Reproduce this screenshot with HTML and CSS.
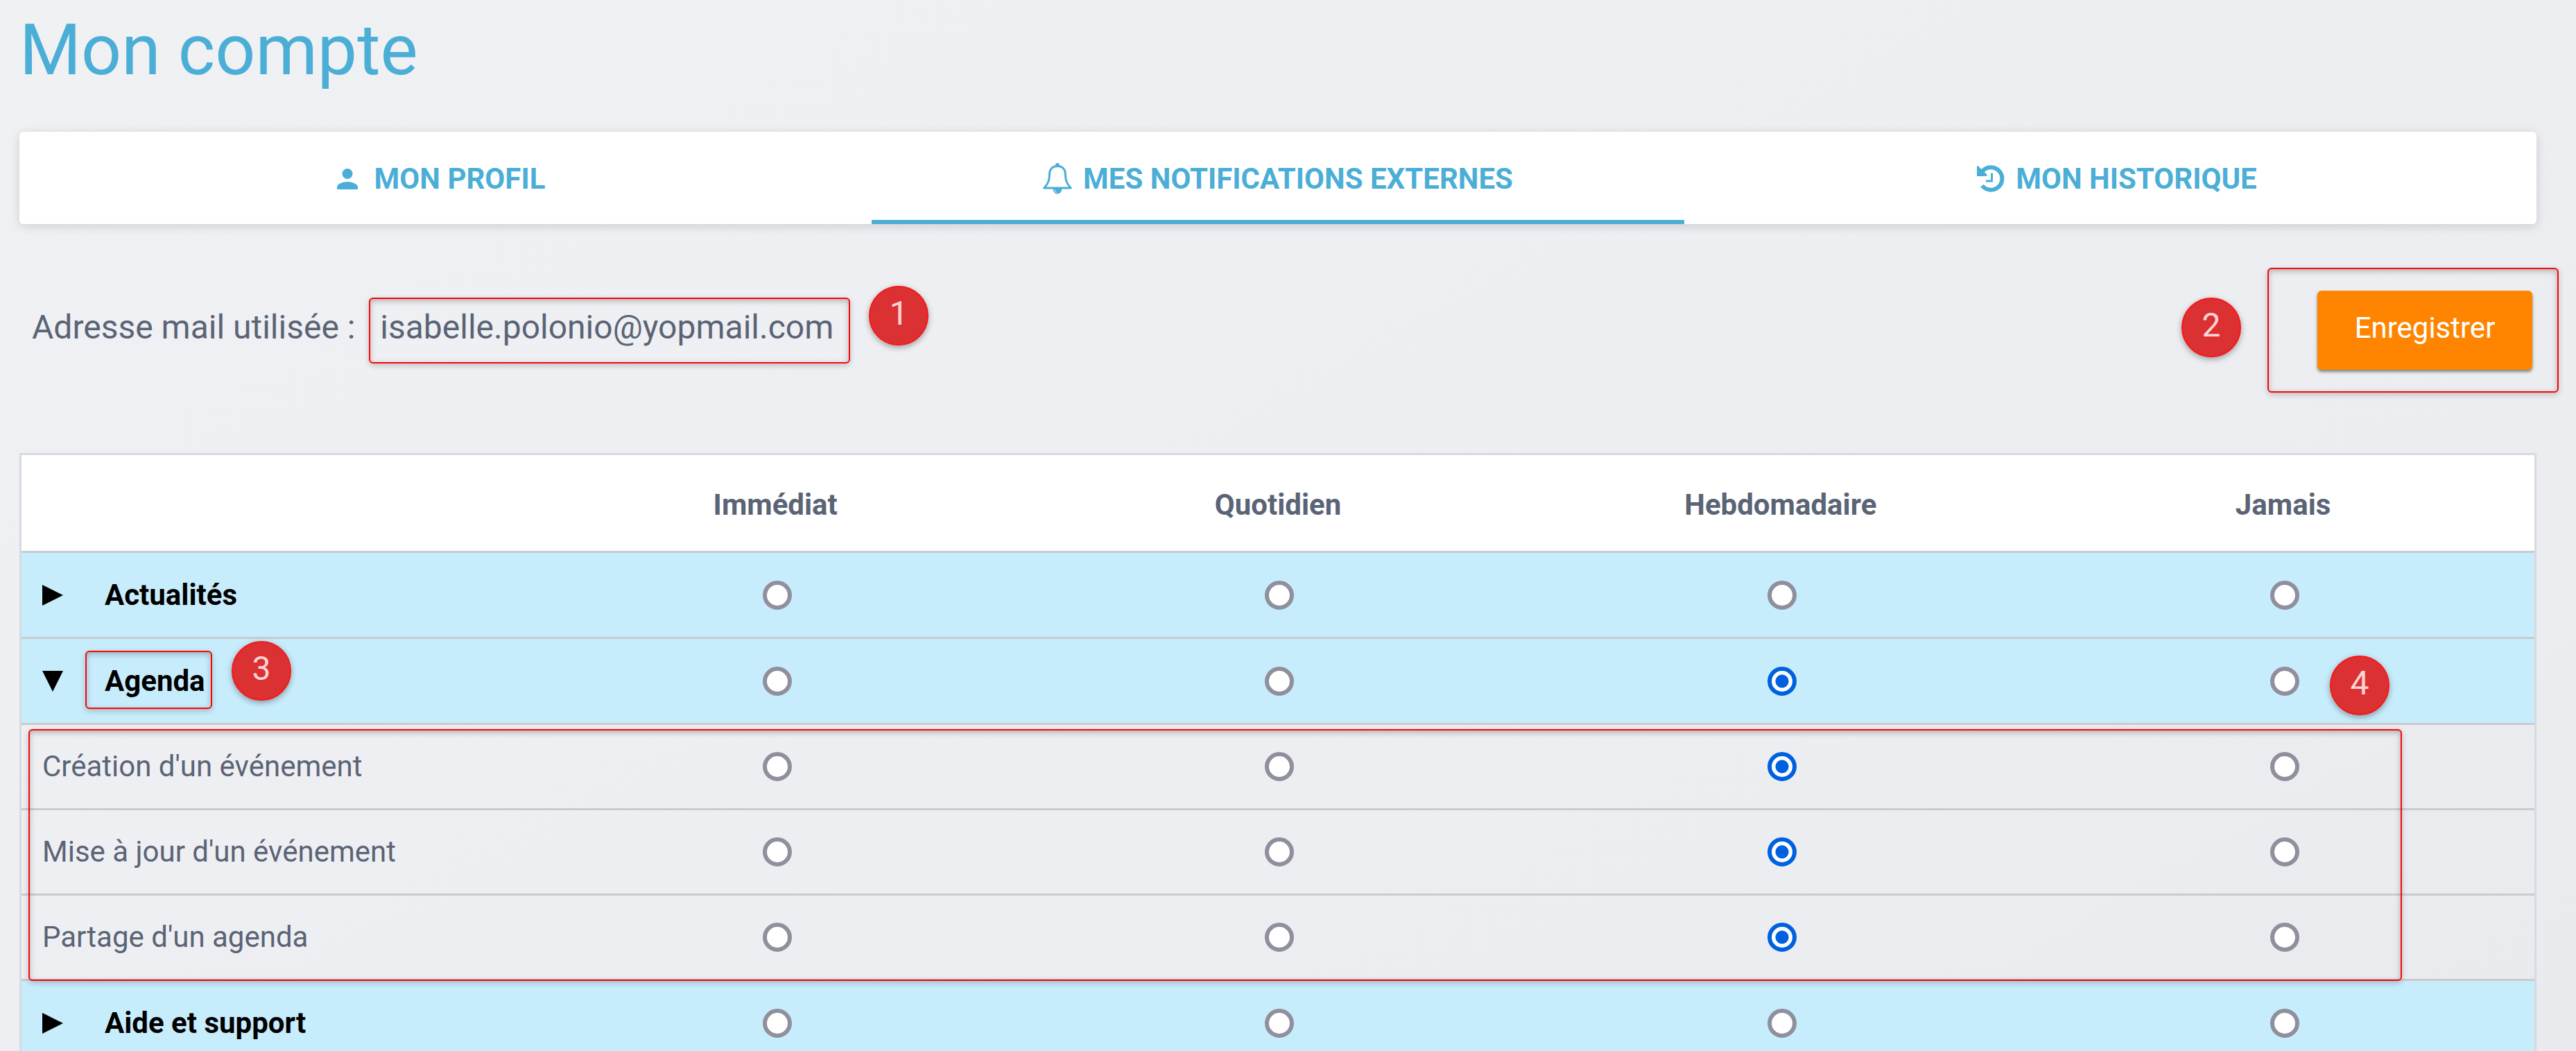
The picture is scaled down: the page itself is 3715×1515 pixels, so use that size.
FILE: index.html
```html
<!DOCTYPE html>
<html lang="fr">
<head>
<meta charset="utf-8">
<meta name="viewport" content="width=device-width, initial-scale=1">
<title>Mon compte</title>
<link rel="stylesheet" href="styles.css">
</head>
<body>
<main class="page">
  <h1 class="title">Mon compte</h1>

  <nav class="tabs">
    <a class="tab" href="#profil">
      <svg class="icon icon-user" viewBox="0 0 30 30" aria-hidden="true"><circle cx="15" cy="7.500" r="7.500"/><path d="M0 30v-3c0-5 8-8 15-8s15 3 15 8v3z"/></svg>
      <span>MON PROFIL</span>
    </a>
    <a class="tab tab-active" href="#notifications" aria-current="page">
      <svg class="icon icon-bell" viewBox="0 0 42 45" aria-hidden="true"><path class="bell-line" d="M21 4.500C13 4.500 9.500 10 9.500 16C9.500 26 7 30 1.800 36H40.200C35 30 32.500 26 32.500 16C32.500 10 29 4.500 21 4.500Z"/><circle cx="21" cy="3" r="3"/><path d="M14.500 37a6.500 7.500 0 0 0 13 0z"/><path class="bell-glint" d="M16.800 38.500q.8 3 3 4"/></svg>
      <span>MES NOTIFICATIONS EXTERNES</span>
    </a>
    <a class="tab" href="#historique">
      <svg class="icon icon-history" viewBox="0 0 40 40" aria-hidden="true"><path class="history-line" d="M8 8.800A16.200 16.200 0 1 1 7.500 29.500"/><path d="M0 1.500Q1.500 0 3 2.500L15.500 14.500Q13 16 11 16H0z"/><path class="history-hand" d="M21.500 11.500V23H13"/></svg>
      <span>MON HISTORIQUE</span>
    </a>
  </nav>

  <form class="settings">
    <div class="toolbar">
      <p class="mail">Adresse mail utilisée : <span class="address">isabelle.polonio@yopmail.com<span class="frame frame-address"></span><span class="pin pin-1">1</span></span></p>
      <div class="save-area">
        <button class="save" type="submit">Enregistrer</button>
        <span class="frame frame-save"></span><span class="pin pin-2">2</span>
      </div>
    </div>

    <div class="grid-area">
      <table class="grid">
        <thead>
          <tr><td></td><th scope="col">Immédiat</th><th scope="col">Quotidien</th><th scope="col">Hebdomadaire</th><th scope="col">Jamais</th></tr>
        </thead>
        <tbody>
          <tr class="group">
            <th scope="row"><button class="toggle" type="button" aria-expanded="false"><svg class="arrow" viewBox="0 0 30 30" aria-hidden="true"><path d="M0 0L30 15L0 30z"/></svg>Actualités</button></th>
            <td><input type="radio" name="actualites" aria-label="Actualités, immédiat"></td>
            <td><input type="radio" name="actualites" aria-label="Actualités, quotidien"></td>
            <td><input type="radio" name="actualites" aria-label="Actualités, hebdomadaire"></td>
            <td><input type="radio" name="actualites" aria-label="Actualités, jamais"></td>
          </tr>
          <tr class="group">
            <th scope="row"><button class="toggle" type="button" aria-expanded="true"><svg class="arrow" viewBox="0 0 30 30" aria-hidden="true"><path d="M0 0H30L15 30z"/></svg><span class="agenda">Agenda<span class="frame frame-agenda"></span><span class="pin pin-3">3</span></span></button></th>
            <td><input type="radio" name="agenda" aria-label="Agenda, immédiat"></td>
            <td><input type="radio" name="agenda" aria-label="Agenda, quotidien"></td>
            <td><input type="radio" name="agenda" aria-label="Agenda, hebdomadaire" checked></td>
            <td><input type="radio" name="agenda" aria-label="Agenda, jamais"></td>
          </tr>
          <tr>
            <th scope="row">Création d'un événement</th>
            <td><input type="radio" name="creation" aria-label="Création d'un événement, immédiat"></td>
            <td><input type="radio" name="creation" aria-label="Création d'un événement, quotidien"></td>
            <td><input type="radio" name="creation" aria-label="Création d'un événement, hebdomadaire" checked></td>
            <td><input type="radio" name="creation" aria-label="Création d'un événement, jamais"></td>
          </tr>
          <tr>
            <th scope="row">Mise à jour d'un événement</th>
            <td><input type="radio" name="maj" aria-label="Mise à jour d'un événement, immédiat"></td>
            <td><input type="radio" name="maj" aria-label="Mise à jour d'un événement, quotidien"></td>
            <td><input type="radio" name="maj" aria-label="Mise à jour d'un événement, hebdomadaire" checked></td>
            <td><input type="radio" name="maj" aria-label="Mise à jour d'un événement, jamais"></td>
          </tr>
          <tr>
            <th scope="row">Partage d'un agenda</th>
            <td><input type="radio" name="partage" aria-label="Partage d'un agenda, immédiat"></td>
            <td><input type="radio" name="partage" aria-label="Partage d'un agenda, quotidien"></td>
            <td><input type="radio" name="partage" aria-label="Partage d'un agenda, hebdomadaire" checked></td>
            <td><input type="radio" name="partage" aria-label="Partage d'un agenda, jamais"></td>
          </tr>
          <tr class="group">
            <th scope="row"><button class="toggle" type="button" aria-expanded="false"><svg class="arrow" viewBox="0 0 30 30" aria-hidden="true"><path d="M0 0L30 15L0 30z"/></svg>Aide et support</button></th>
            <td><input type="radio" name="aide" aria-label="Aide et support, immédiat"></td>
            <td><input type="radio" name="aide" aria-label="Aide et support, quotidien"></td>
            <td><input type="radio" name="aide" aria-label="Aide et support, hebdomadaire"></td>
            <td><input type="radio" name="aide" aria-label="Aide et support, jamais"></td>
          </tr>
        </tbody>
      </table>
      <span class="frame frame-rows"></span><span class="pin pin-4">4</span>
    </div>
  </form>
</main>
</body>
</html>
```
FILE: styles.css
```css
* { box-sizing: border-box; }

html { background: #eceef1; }

body {
  margin: 0;
  min-height: 100vh;
  overflow: hidden;
  background: linear-gradient(150deg, #eff1f3, #eeeff3 35%, #ecedf1 75%, #e9eaee);
  color: #5a6475;
  font: 400 42px/48px Roboto, "Liberation Sans", sans-serif;
}

.page { padding: 12px 57px 0 28px; }

.title {
  margin: 0 0 58px;
  color: #4baed6;
  font-size: 102px;
  font-weight: 400;
  line-height: 120px;
}

/* Tab bar */
.tabs {
  display: flex;
  gap: 38px;
  padding: 0 19px;
  height: 133px;
  border-radius: 6px;
  background: #fff;
  box-shadow: 0 3px 15px rgba(0, 0, 0, .15);
}

.tab {
  flex: 1 1 0;
  display: flex;
  align-items: center;
  justify-content: center;
  gap: 16px;
  padding-top: 8px;
  border-bottom: 6px solid transparent;
  color: #4baed6;
  font-weight: 700;
  text-decoration: none;
}

.tab-active { border-bottom-color: #4baed6; }

.icon { fill: currentColor; }
.icon-user { width: 30px; height: 30px; margin: 0 8px 0 6px; }
.icon-bell { width: 42px; height: 45px; }
.icon-history { width: 40px; height: 40px; }

.bell-line { fill: none; stroke: currentColor; stroke-width: 3; stroke-linejoin: round; }
.bell-glint { fill: none; stroke: #fff; stroke-width: 1; }
.history-line { fill: none; stroke: currentColor; stroke-width: 6; }
.history-hand { fill: none; stroke: currentColor; stroke-width: 3; }

/* Address and save button */
.toolbar {
  display: flex;
  align-items: center;
  justify-content: space-between;
  padding: 96px 6px 120px 18px;
}

.mail { margin: 0; padding-bottom: 8px; font-size: 48px; line-height: 56px; }

.address { position: relative; margin-left: 24px; }

.save-area { position: relative; }

.save {
  display: block;
  width: 310px;
  height: 114px;
  padding: 0 0 6px;
  border: 0;
  border-radius: 6px;
  background: #ff8500;
  box-shadow: 0 3px 4px rgba(0, 0, 0, .45);
  color: #fff;
  font: inherit;
}

/* Notification grid */
.grid-area { position: relative; }

.grid {
  width: 100%;
  table-layout: fixed;
  border: 3px solid #d7dae0;
  border-bottom: 0;
  border-collapse: separate;
  border-spacing: 0;
}

.grid th, .grid td {
  height: 123px;
  padding: 0;
  border-bottom: 3px solid #cacbcd;
  text-align: center;
  vertical-align: middle;
}

.grid thead th, .grid thead td { height: 141px; padding-top: 6px; background: #fff; }
.grid .group th, .grid .group td { height: 124px; background: #c7ecfc; }

.grid tbody th { padding-left: 30px; font-weight: 400; text-align: left; }
.grid tbody td { padding-left: 5px; }

.toggle {
  display: flex;
  align-items: center;
  gap: 60px;
  padding: 0;
  border: 0;
  background: none;
  color: #000;
  font: inherit;
  font-weight: 700;
}

.arrow { width: 30px; height: 30px; }

.agenda { position: relative; }

.grid input {
  appearance: none;
  display: block;
  width: 42px;
  height: 42px;
  margin: 0 auto;
  border: 6px solid #8f8f9d;
  border-radius: 50%;
  background: #fff;
}

.grid input:checked {
  border-color: #0061e0;
  background: radial-gradient(circle, #0061e0 9px, #fff 10px);
}

/* Numbered callouts */
.frame {
  position: absolute;
  border: 2px solid #ff0000;
  border-radius: 6px;
  outline: 1px solid rgba(230, 40, 40, .35);
  outline-offset: -1px;
  box-shadow: 0 3px 8px rgba(0, 0, 0, .2), inset 0 3px 8px rgba(0, 0, 0, .25);
  pointer-events: none;
}

.pin {
  position: absolute;
  width: 86px;
  height: 86px;
  border: 2px solid #f91616;
  border-radius: 50%;
  background: #dc3133;
  box-shadow: 0 3px 8px rgba(0, 0, 0, .35);
  color: #fbd5d5;
  font-size: 48px;
  font-weight: 400;
  line-height: 76px;
  text-align: center;
}

.frame-address { inset: -14px -24px -24px -16px; }
.pin-1 { top: -31px; right: -137px; }
.frame-save { inset: -33px -38px -33px -72px; }
.pin-2 { top: 10px; left: -196px; }
.frame-agenda { inset: -20px -10px -16px -28px; }
.pin-3 { top: -34px; left: 183px; }
.frame-rows { top: 398px; left: 13px; right: 194px; height: 363px; }
.pin-4 { top: 292px; right: 212px; }
```
